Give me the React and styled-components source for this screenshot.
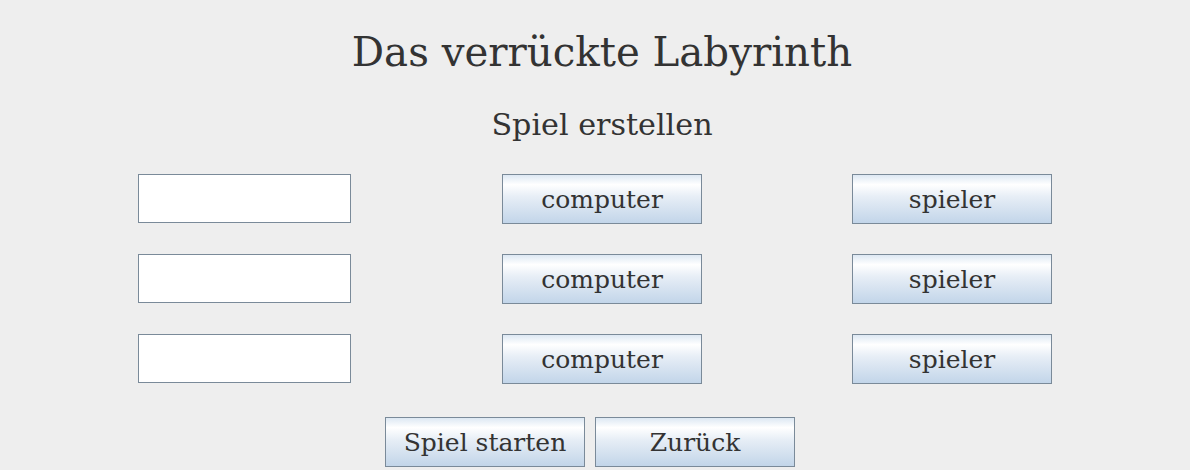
import React from "react";
import styled, { createGlobalStyle } from "styled-components";

const Global = createGlobalStyle`
  html, body { margin: 0; padding: 0; background: #eeeeee; }
  body { font-family: "DejaVu Serif", serif; color: #333333; }
`;

const Page = styled.div`
  width: 1190px;
  height: 470px;
  overflow: hidden;
  display: flex;
  flex-direction: column;
  align-items: center;
`;

const Title = styled.h1`
  margin: 0;
  padding: 30px 0 0 14px;
  font-weight: normal;
  font-size: 40.3px;
  line-height: 46px;
`;

const Subtitle = styled.h2`
  margin: 0;
  padding: 32px 0 0 14px;
  font-weight: normal;
  font-size: 30.2px;
  line-height: 34px;
`;

const Grid = styled.div`
  margin-top: 32px;
  display: grid;
  grid-template-columns: 214px 200px 200px;
  column-gap: 150px;
  row-gap: 30px;
  align-items: start;
`;

const Field = styled.input`
  box-sizing: border-box;
  width: 213px;
  height: 49px;
  margin: 0;
  border: 1px solid #7a8a99;
  background: #ffffff;
  box-shadow: inset -1px -1px 0 #ffffff;
  outline: none;
  font-family: "DejaVu Serif", serif;
  font-size: 25px;
  padding: 0 6px;
`;

const Button = styled.button`
  box-sizing: border-box;
  width: 200px;
  height: 50px;
  margin: 0;
  padding: 0;
  border: 1px solid #7a8a99;
  background: linear-gradient(
    to bottom,
    #dde8f3 0%,
    #ffffff 20%,
    #e7eef6 45%,
    #c2d5e9 100%
  );
  font-family: "DejaVu Serif", serif;
  font-size: 25px;
  color: #333333;
  cursor: pointer;
`;

const Footer = styled.div`
  margin-top: 33px;
  align-self: stretch;
  display: flex;
  justify-content: center;
  gap: 10px;
  padding-right: 10px;
`;

const players = [0, 1, 2];

export default function App() {
  return (
    <Page>
      <Global />
      <Title>Das verrückte Labyrinth</Title>
      <Subtitle>Spiel erstellen</Subtitle>
      <Grid>
        {players.map((i) => (
          <React.Fragment key={i}>
            <Field type="text" />
            <Button>computer</Button>
            <Button>spieler</Button>
          </React.Fragment>
        ))}
      </Grid>
      <Footer>
        <Button>Spiel starten</Button>
        <Button>Zurück</Button>
      </Footer>
    </Page>
  );
}
